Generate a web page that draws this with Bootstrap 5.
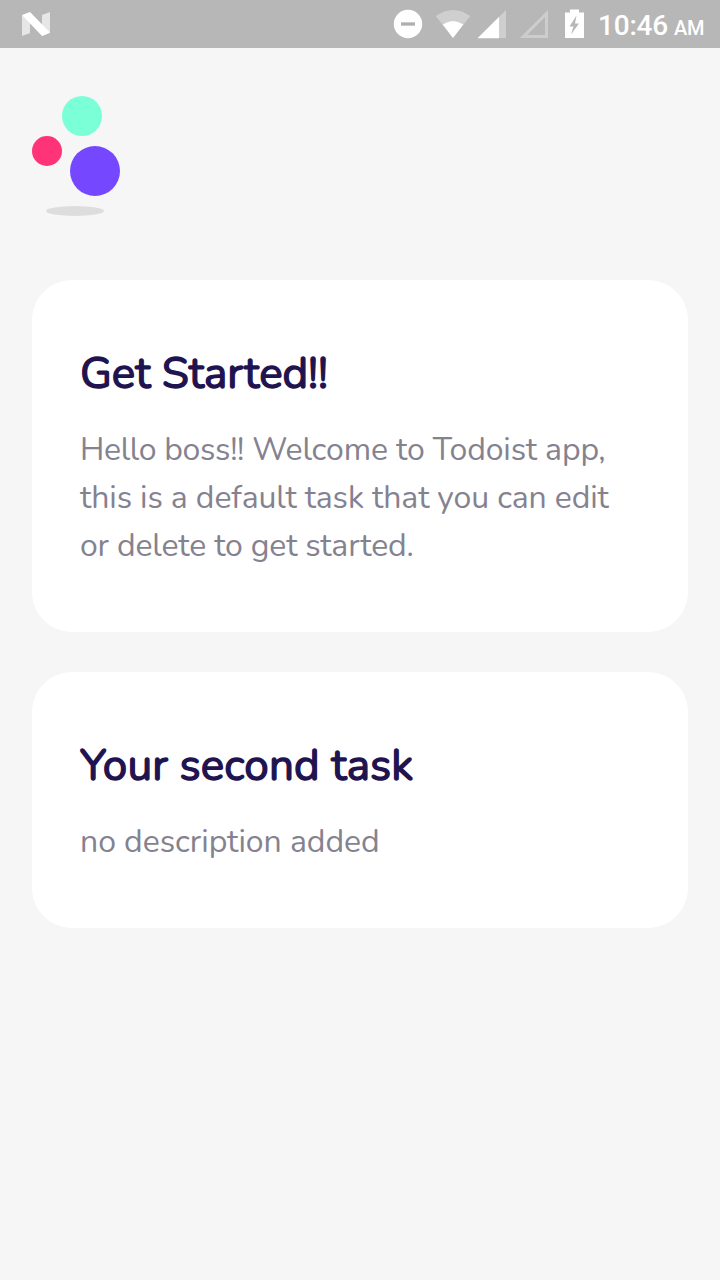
<!DOCTYPE html>
<html lang="en">
<head>
<meta charset="utf-8">
<meta name="viewport" content="width=device-width, initial-scale=1">
<title>Todoist</title>
<link href="https://cdn.jsdelivr.net/npm/bootstrap@5.3.0/dist/css/bootstrap.min.css" rel="stylesheet">
<style>
body{background:#f6f6f6;font-family:Nunito,Lato,sans-serif;min-height:100vh}
.statusbar{height:48px;background:#b7b7b7;color:#fff;font-family:Roboto,sans-serif}
.status-icons{width:200px;height:48px}
.clock{font-size:28px;font-weight:500;line-height:52px;height:48px;width:129px;padding-left:7px;letter-spacing:-.2px}
.clock span{font-size:20px;margin-left:6px}
.page{padding:48px 32px}
.logo{width:88px;height:120px;margin-bottom:64px}
.task{border:0;border-radius:40px;padding:67px 48px 62px;margin-bottom:40px}
.task h2{font-size:44px;line-height:54px;font-weight:400;color:#1f1450;-webkit-text-stroke:1.4px #1f1450;margin-bottom:25px;white-space:nowrap}
.task p{font-size:32px;line-height:48px;color:#858290;white-space:nowrap}
.title-tight{letter-spacing:-.08px}
.title-loose{letter-spacing:.1px}
.greeting{letter-spacing:-.33px}
.copy{letter-spacing:-.11px}
.copy-end{letter-spacing:-.17px}
.copy-short{letter-spacing:-.04px}
</style>
</head>
<body>
<header class="statusbar d-flex justify-content-between">
  <svg width="60" height="48" viewBox="0 0 60 48"><path fill="#e6e6e6" d="M22 15v21l8-3V17zM42 15l8-3v21l-8 3z"/><path fill="#fff" d="M22 15l8-3 20 20.500-8 3.500z"/></svg>
  <div class="d-flex">
    <svg class="status-icons" viewBox="391 0 200 48" fill="#fff">
      <circle cx="408" cy="24" r="14.200"/><path fill="#b0b0b0" d="M401 22.300h14v3.400h-14z"/>
      <path fill="#cfcfcf" d="M435.700 16Q453 4 470.300 16L453 38z"/><path d="M442.700 24.500Q453 17.500 463.300 24.500L453 38z"/>
      <path fill="#cfcfcf" d="M506 10v28h-28z"/><path d="M499 17v21.300h-21.500z"/>
      <path fill="none" stroke="#cdcdcd" stroke-width="3" d="M546.500 13.500v23h-23z"/>
      <path fill-rule="evenodd" d="M570 9.500h9v3h5V38h-19V12.500h5zM576.500 15.500L569.500 26.500H573.500L571 34.500L579 23.500H575z"/>
    </svg>
    <div class="clock text-nowrap">10:46<span>AM</span></div>
  </div>
</header>
<main class="page">
  <svg class="logo d-block" viewBox="0 0 88 120">
    <circle cx="50" cy="20" r="20" fill="#7bffd7"/><circle cx="15" cy="55" r="15" fill="#ff3378"/><circle cx="63" cy="75" r="25" fill="#7548ff"/><ellipse cx="43" cy="115" rx="29" ry="5" fill="#ddd"/>
  </svg>
  <article class="card task">
    <h2 class="title-tight">Get Started!!</h2>
    <p class="mb-0 copy"><span class="greeting">Hello boss!!</span> Welcome to Todoist app,<br>this is a default task that you can edit<br><span class="copy-end">or delete to get started.</span></p>
  </article>
  <article class="card task">
    <h2 class="title-loose">Your second task</h2>
    <p class="mb-0 copy-short">no description added</p>
  </article>
</main>
<script src="https://cdn.jsdelivr.net/npm/bootstrap@5.3.0/dist/js/bootstrap.bundle.min.js"></script>
</body>
</html>
